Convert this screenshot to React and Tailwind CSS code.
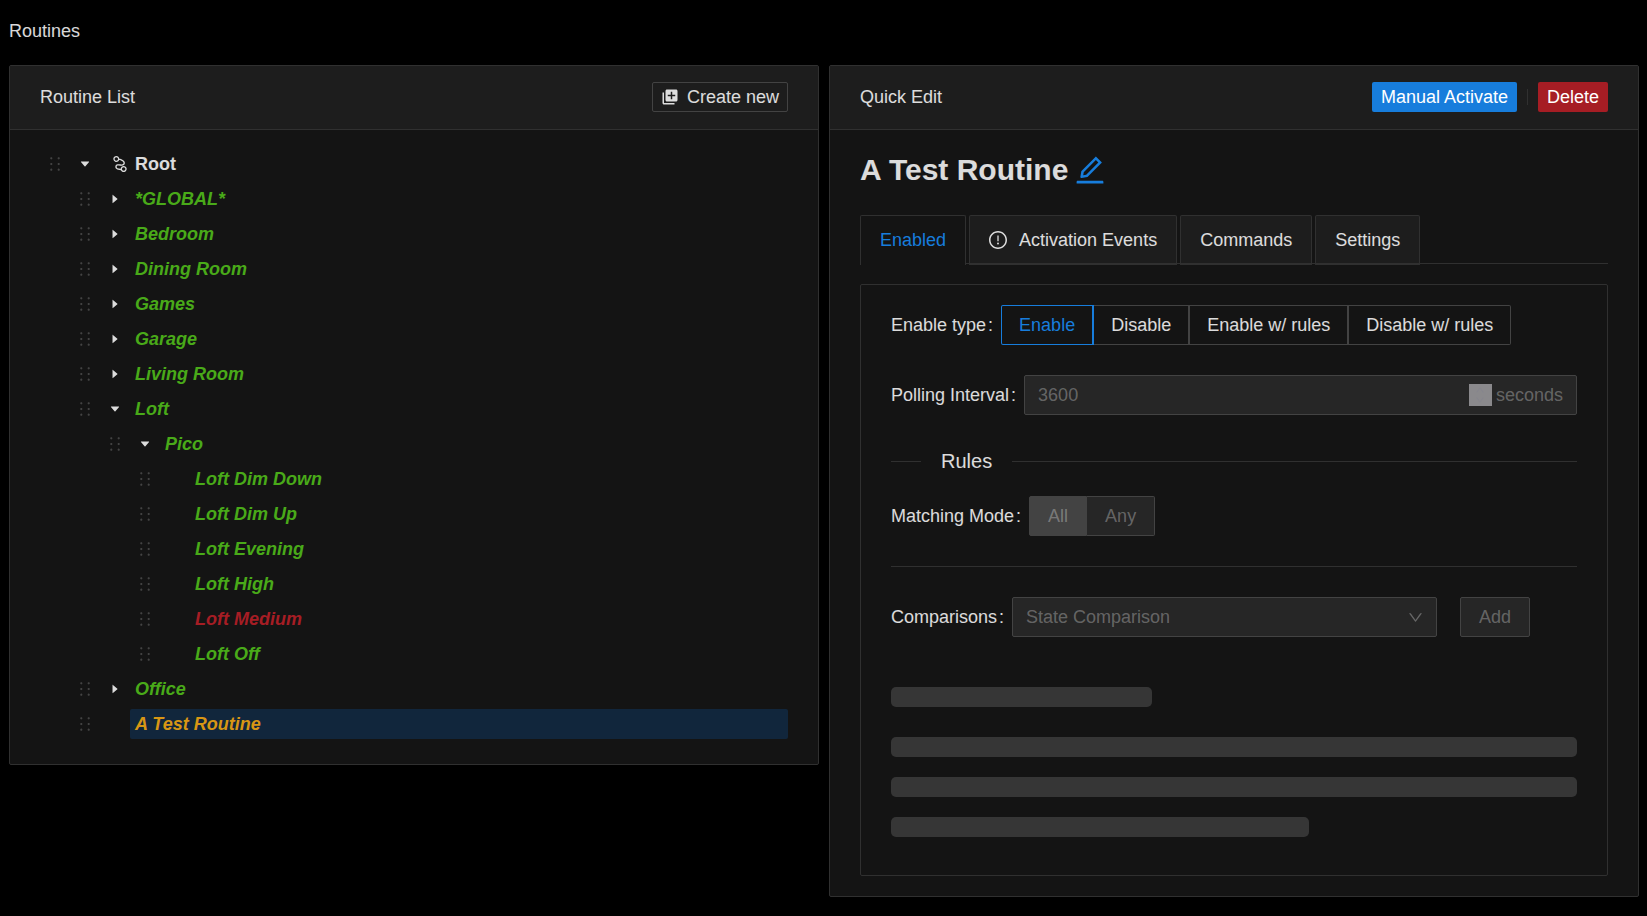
import { useState } from "react";
import {
  AiOutlineHolder,
  AiFillCaretDown,
  AiFillCaretRight,
  AiOutlineNodeIndex,
  AiOutlineEdit,
  AiOutlineExclamationCircle,
  AiOutlineDown,
  AiOutlineUp,
} from "react-icons/ai";

const TIGHT = "64 64 896 896";

const INDENT = ["pl-0", "pl-[30px]", "pl-[60px]", "pl-[90px]"];

const TREE = [
  { label: "*GLOBAL*", level: 1, state: "closed" },
  { label: "Bedroom", level: 1, state: "closed" },
  { label: "Dining Room", level: 1, state: "closed" },
  { label: "Games", level: 1, state: "closed" },
  { label: "Garage", level: 1, state: "closed" },
  { label: "Living Room", level: 1, state: "closed" },
  { label: "Loft", level: 1, state: "open" },
  { label: "Pico", level: 2, state: "open" },
  { label: "Loft Dim Down", level: 3 },
  { label: "Loft Dim Up", level: 3 },
  { label: "Loft Evening", level: 3 },
  { label: "Loft High", level: 3 },
  { label: "Loft Medium", level: 3, color: "text-[#a61d24]" },
  { label: "Loft Off", level: 3 },
  { label: "Office", level: 1, state: "closed" },
  { label: "A Test Routine", level: 1, color: "text-[#d89614]", selected: true },
];

function AddBoxIcon() {
  return (
    <svg width="18" height="18" viewBox="0 0 24 24" fill="currentColor" aria-hidden="true">
      <path d="M4 6H2v14c0 1.1.9 2 2 2h14v-2H4V6zm16-4H8c-1.1 0-2 .9-2 2v12c0 1.1.9 2 2 2h12c1.1 0 2-.9 2-2V4c0-1.1-.9-2-2-2zm-1 9h-4v4h-2v-4H9V9h4V5h2v4h4v2z" />
    </svg>
  );
}

function Card({ title, extra, children }) {
  return (
    <section className="min-w-0 flex-1 rounded-xs border border-[#303030] bg-[#141414]">
      <header className="flex items-center justify-between border-b border-[#303030] bg-[#1d1d1d] px-[30px] pt-4 pb-[17px]">
        <h2>{title}</h2>
        <div className="flex items-center">{extra}</div>
      </header>
      {children}
    </section>
  );
}

function TreeRow({ label, level, state, color = "text-[#49aa19]", selected, root }) {
  return (
    <li
      role="treeitem"
      aria-level={level + 1}
      aria-selected={!!selected}
      className={`mb-[5px] flex h-[30px] items-center ${INDENT[level]}`}
    >
      <span className="flex w-[30px] shrink-0 justify-center text-white/20">
        <AiOutlineHolder size={18} viewBox={TIGHT} />
      </span>
      {state ? (
        <button type="button" aria-label={`Toggle ${label}`} className="flex h-full w-[30px] shrink-0 items-center justify-center">
          {state === "open" ? <AiFillCaretDown size={12} /> : <AiFillCaretRight size={12} />}
        </button>
      ) : (
        <span className="w-[30px] shrink-0" />
      )}
      <button
        type="button"
        className={`flex h-full flex-1 items-center rounded-xs px-[5px] text-left font-bold ${root ? "" : `italic ${color}`} ${selected ? "bg-[#11263c]" : ""}`}
      >
        {root && (
          <span className="flex w-[30px] justify-center">
            <AiOutlineNodeIndex size={18} viewBox={TIGHT} />
          </span>
        )}
        {label}
      </button>
    </li>
  );
}

function Tab({ active, children }) {
  return (
    <button
      type="button"
      role="tab"
      aria-selected={!!active}
      className={`relative flex h-[50px] items-center rounded-t-xs border-x border-t border-[#303030] px-[19px] ${
        active ? "bg-[#141414] pb-0.5 text-[#177ddc]" : "border-b-2 bg-[#1d1d1d]"
      }`}
    >
      {children}
    </button>
  );
}

const LABEL = "shrink-0 after:ml-0.5 after:mr-2 after:content-[':']";

function EnableType() {
  const [value, setValue] = useState("Enable");
  const options = ["Enable", "Disable", "Enable w/ rules", "Disable w/ rules"];
  return (
    <div role="radiogroup" aria-labelledby="enable-type" className="flex">
      {options.map((option, i) => (
        <label
          key={option}
          className={`flex h-10 items-center border-y px-[17px] first:rounded-l-xs first:border-l last:rounded-r-xs ${
            i === options.length - 1 ? "border-r" : "border-r-2"
          } ${value === option ? "border-[#177ddc] text-[#177ddc]" : "border-[#434343]"}`}
        >
          <input
            type="radio"
            name="enable-type"
            className="sr-only"
            checked={value === option}
            onChange={() => setValue(option)}
          />
          {option}
        </label>
      ))}
    </div>
  );
}

export default function App() {
  return (
    <div className="min-h-screen bg-black pt-4 pr-2 pl-[9px] font-['Liberation_Sans',Arial,sans-serif] text-[18px] leading-[30px] text-white/85">
      <h1 className="mb-[19px]">Routines</h1>
      <main className="flex items-start gap-[10px]">
        <Card
          title="Routine List"
          extra={
            <button type="button" className="flex h-[30px] items-center gap-2 rounded-xs border border-[#434343] px-2">
              <AddBoxIcon />
              Create new
            </button>
          }
        >
          <ul role="tree" className="px-[30px] pt-[19px] pb-5">
            <TreeRow label="Root" level={0} state="open" root />
            {TREE.map((node) => (
              <TreeRow key={node.label} {...node} />
            ))}
          </ul>
        </Card>

        <Card
          title="Quick Edit"
          extra={
            <>
              <button type="button" className="flex h-[30px] items-center rounded-xs bg-[#177ddc] px-[9px] text-white">
                Manual Activate
              </button>
              <span className="mx-[10px] h-4 w-px bg-[#303030]" />
              <button type="button" className="flex h-[30px] items-center rounded-xs bg-[#a61d24] px-[9px] text-white">
                Delete
              </button>
            </>
          }
        >
          <div className="px-[30px] pt-5 pb-5">
            <div className="mb-[25px] flex h-10 items-center gap-[7px]">
              <h3 className="text-[30px] leading-10 font-bold">A Test Routine</h3>
              <button type="button" aria-label="Edit name" className="text-[#177ddc]">
                <AiOutlineEdit size={30} viewBox={TIGHT} />
              </button>
            </div>

            <div role="tablist" className="relative mb-[19px] flex gap-[3px]">
              <span className="absolute inset-x-0 bottom-px h-px bg-[#303030]" />
              <Tab active>Enabled</Tab>
              <Tab>
                <AiOutlineExclamationCircle size={18} viewBox={TIGHT} className="mr-3" />
                Activation Events
              </Tab>
              <Tab>Commands</Tab>
              <Tab>Settings</Tab>
            </div>

            <form className="rounded-xs border border-[#303030] px-[30px] pt-5 pb-[38px]">
              <div className="mb-[30px] flex items-center">
                <span id="enable-type" className={LABEL}>Enable type</span>
                <EnableType />
              </div>

              <div className="mb-[30px] flex items-center">
                <label htmlFor="polling" className={LABEL}>Polling Interval</label>
                <div className="flex h-10 min-w-0 flex-1 items-center rounded-xs border border-[#434343] bg-[#262626] px-[13px] text-white/30">
                  <input id="polling" type="text" inputMode="numeric" defaultValue="3600" disabled className="min-w-0 flex-1 bg-transparent" />
                  <span className="mr-1 flex h-[22px] w-[23px] flex-col items-center justify-center bg-[#8a898c] text-[#85848e]">
                    <AiOutlineUp size={10} />
                    <AiOutlineDown size={10} />
                  </span>
                  seconds
                </div>
              </div>

              <div className="mb-[19px] flex items-center text-[20px] leading-8">
                <span className="h-px w-[30px] bg-[#303030]" />
                <h4 className="px-5">Rules</h4>
                <span className="h-px flex-1 bg-[#303030]" />
              </div>

              <div className="flex items-center">
                <span id="matching-mode" className={LABEL}>Matching Mode</span>
                <div role="radiogroup" aria-labelledby="matching-mode" className="flex text-white/30">
                  <label className="flex h-10 items-center rounded-l-xs border border-[#434343] bg-[#434343] px-[18px]">
                    <input type="radio" name="matching" className="sr-only" defaultChecked disabled />
                    All
                  </label>
                  <label className="flex h-10 items-center rounded-r-xs border border-l-0 border-[#434343] bg-[#262626] px-[18px]">
                    <input type="radio" name="matching" className="sr-only" disabled />
                    Any
                  </label>
                </div>
              </div>

              <hr className="my-[30px] border-[#303030]" />

              <div className="mb-[50px] flex items-center pr-[47px]">
                <label htmlFor="comparison" className={LABEL}>Comparisons</label>
                <div className="relative mr-[23px] min-w-0 flex-1">
                  <select
                    id="comparison"
                    disabled
                    className="block h-10 w-full appearance-none rounded-xs border border-[#434343] bg-[#262626] px-[13px] text-white/30 opacity-100"
                  >
                    <option>State Comparison</option>
                  </select>
                  <AiOutlineDown size={15} viewBox={TIGHT} className="pointer-events-none absolute top-[13px] right-[14px] text-white/30" />
                </div>
                <button type="button" disabled className="h-10 rounded-xs border border-[#434343] bg-[#262626] px-[18px] text-white/30">
                  Add
                </button>
              </div>

              <div className="flex flex-col gap-5">
                <span className="mb-[10px] h-5 w-[38%] rounded-[5px] bg-[#363636]" />
                <span className="h-5 w-full rounded-[5px] bg-[#363636]" />
                <span className="h-5 w-full rounded-[5px] bg-[#363636]" />
                <span className="h-5 w-[61%] rounded-[5px] bg-[#363636]" />
              </div>
            </form>
          </div>
        </Card>
      </main>
    </div>
  );
}
